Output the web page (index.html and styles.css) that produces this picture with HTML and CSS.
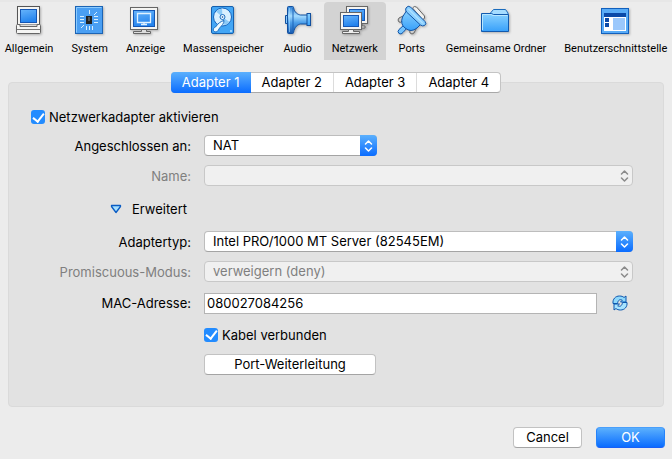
FILE: index.html
```html
<!DOCTYPE html>
<html lang="de">
<head>
<meta charset="utf-8">
<meta name="viewport" content="width=device-width, initial-scale=1">
<title>Netzwerk</title>
<link rel="stylesheet" href="styles.css">
</head>
<body>
<svg class="defs" aria-hidden="true">
  <defs>
    <linearGradient id="screen" x1="0" y1="0" x2="0.3" y2="1"><stop offset="0" stop-color="#67b4fb"/><stop offset="1" stop-color="#2484ee"/></linearGradient>
    <linearGradient id="sky" x1="0" y1="0" x2="0" y2="1"><stop offset="0" stop-color="#8ad2ff"/><stop offset="1" stop-color="#38a0fa"/></linearGradient>
    <linearGradient id="horn" x1="0" y1="0" x2="0" y2="1"><stop offset="0" stop-color="#2b7fd6"/><stop offset="0.35" stop-color="#a5dcff"/><stop offset="0.6" stop-color="#4b9eea"/><stop offset="1" stop-color="#1659b0"/></linearGradient>
    <symbol id="arrows" viewBox="0 0 9 12"><path d="M1.500 4 4.500 1l3 3M1.500 8l3 3 3-3" fill="none" stroke="currentColor" stroke-width="1.500" stroke-linecap="round" stroke-linejoin="round"/></symbol>
  </defs>
</svg>

<nav class="toolbar" aria-label="Einstellungen">
  <button class="tool" type="button">
    <svg class="tool-icon" viewBox="0 0 32 32" aria-hidden="true">
      <rect x="4.500" y="2.500" width="22" height="18" fill="#f4f4f2" stroke="#555"/>
      <rect x="7.500" y="5.500" width="16" height="13" fill="url(#screen)" stroke="#1456b4"/>
      <rect x="3.500" y="20.500" width="24" height="9" rx="1" fill="#f5f5f3" stroke="#666"/>
      <path d="M7 20.500v2h17v-2" fill="#ddd" stroke="#666"/>
      <path d="M4 25.500h23" stroke="#777"/>
    </svg>
    <span>Allgemein</span>
  </button>
  <button class="tool" type="button">
    <svg class="tool-icon" viewBox="0 0 32 32" aria-hidden="true">
      <rect x="1.500" y="2.500" width="27" height="27" fill="#4a9ff3" stroke="#1c64b4"/>
      <path d="M2.500 28.500v-25h25" fill="none" stroke="#8bcbff"/>
      <rect x="12.500" y="12.500" width="5" height="7" fill="#222" stroke="#222"/>
      <path d="M14 13h2v4h-2z" fill="#555"/>
      <path d="M6 12.500h4M6 15.500h4M6 18.500h4M20 12.500h4M20 15.500h4M20 18.500h4M15.500 6v4M15.500 22v4M12.500 22v4M18.500 22v4M20 11l3-3M7 24l3-3" stroke="#d6efff"/>
    </svg>
    <span>System</span>
  </button>
  <button class="tool" type="button">
    <svg class="tool-icon" viewBox="0 0 32 32" aria-hidden="true">
      <rect x="1.500" y="3.500" width="27" height="22" fill="#f4f4f2" stroke="#666"/>
      <rect x="4.500" y="6.500" width="21" height="16" fill="url(#screen)" stroke="#1456b4"/>
      <path d="M8.500 9.500h13v9h-13zM15 18v3M12 20.500h6" fill="none" stroke="#e0f1ff" stroke-width="1.300"/>
      <path d="M12.500 25.500h5v2h4v2h-17v-2h8z" fill="#ddd" stroke="#666"/>
    </svg>
    <span>Anzeige</span>
  </button>
  <button class="tool" type="button">
    <svg class="tool-icon" viewBox="0 0 32 32" aria-hidden="true">
      <rect x="4.500" y="2.500" width="22" height="27" rx="1.500" fill="#43a6f5" stroke="#1560ae"/>
      <circle cx="15.500" cy="13" r="9" fill="#d9f0ff" stroke="#1665bd"/>
      <path d="M15.500 13 9 7.500A9 9 0 0 1 15 4.500zM15.500 13l7 5a8 8 0 0 1-5 3.300z" fill="#8ccaf7"/>
      <circle cx="15.500" cy="13" r="2.500" fill="#eefaff" stroke="#1b6cc0"/>
      <circle cx="15.500" cy="13" r=".8" fill="#0b4798"/>
      <path d="M17 16.500c-3 .5-6 3-8.500 6.500-3 1-3 5 .5 5 2.500-.5 2.500-3 4-4.500 2-2 4-4 4-7z" fill="#eefaff" stroke="#1b6cc0"/>
      <circle cx="24" cy="27" r="1" fill="#bce3ff"/>
    </svg>
    <span>Massenspeicher</span>
  </button>
  <button class="tool" type="button">
    <svg class="tool-icon" viewBox="0 0 32 32" aria-hidden="true">
      <path d="M5.500 11.500h-2v8h2z" fill="#86cbff" stroke="#12509f"/>
      <path d="M5.500 3.500q0-1 1-1h4q1 0 1 1c1 5 4 7 7 7.500h7v9h-7c-3 .5-6 3-7 8.500q0 1-1 1h-4q-1 0-1-1z" fill="url(#horn)" stroke="#12509f"/>
      <path d="M11 4v24" stroke="#1b62b7"/>
      <path d="M7.500 4v24" stroke="#a8dbff" opacity=".6"/>
      <rect x="25" y="9.500" width="3.500" height="12" fill="url(#sky)" stroke="#12509f"/>
    </svg>
    <span>Audio</span>
  </button>
  <button class="tool tool-active" type="button" aria-current="page">
    <svg class="tool-icon" viewBox="0 0 32 32" aria-hidden="true">
      <rect x="7.500" y="2.500" width="21" height="17" fill="#f4f4f2" stroke="#666"/>
      <rect x="10.500" y="5.500" width="15" height="11" fill="url(#screen)" stroke="#1456b4"/>
      <path d="M23 20v2h3v2h-5" fill="#eee" stroke="#666"/>
      <rect x="1.500" y="8.500" width="21" height="17" fill="#f4f4f2" stroke="#666"/>
      <rect x="4.500" y="11.500" width="15" height="11" fill="url(#screen)" stroke="#1456b4"/>
      <path d="M9.500 25.500h5v2h6v2h-17v-2h6z" fill="#eee" stroke="#666"/>
    </svg>
    <span>Netzwerk</span>
  </button>
  <button class="tool" type="button">
    <svg class="tool-icon" viewBox="0 0 32 32" aria-hidden="true">
      <path d="M16.500 4q1.500-2.500 4-1l8 9q1 3-2 3.500z" fill="#f0f0ee" stroke="#666"/>
      <path d="M9 11l-6 3q-2 2 0 4 2 1 3-1zM21 23l-3 6q-2 2-4 0-1-2 1-4z" fill="#ccc" stroke="#666"/>
      <path d="M8 21l-5 4.500q-2 2 0 4 2 1.500 4-1l4-4.500" fill="#73c3ff" stroke="#1254a6"/>
      <path d="M11 6 6.500 13Q4 20 9 24q6 5 12 0l5-5z" fill="url(#sky)" stroke="#1254a6"/>
      <path d="M10 4q2-3 4.500-1L29 17.500q2 2.500-.5 4-2 1-4-.5L10.500 8q-1.500-2-.5-4z" fill="#8bd0ff" stroke="#1254a6"/>
      <path d="M12.500 5 27 19.500" stroke="#c9ecff"/>
    </svg>
    <span>Ports</span>
  </button>
  <button class="tool" type="button">
    <svg class="tool-icon" viewBox="0 0 32 32" aria-hidden="true">
      <path d="M10.500 12V9l3-3.500h12L28 9v4z" fill="#a6dcff" stroke="#1b6cbd"/>
      <path d="M1.500 9.500h10l2 1h15v17h-27z" fill="url(#sky)" stroke="#125aae"/>
      <path d="M2.500 26v-15.500h8.500l2 1h14.500" fill="none" stroke="#b8e6ff"/>
    </svg>
    <span>Gemeinsame Ordner</span>
  </button>
  <button class="tool" type="button">
    <svg class="tool-icon" viewBox="0 0 32 32" aria-hidden="true">
      <rect x="1.500" y="4.500" width="27" height="25" fill="#58abf7" stroke="#1260bd"/>
      <path d="M4 9h22v18H4z" fill="#fff"/>
      <path d="M4 9h22v4H4zM5 14h4v4H5zM5 19h4v4H5z" fill="#0a49a8"/>
      <path d="M13 14h12v12H13z" fill="#9bc8fc"/>
    </svg>
    <span>Benutzerschnittstelle</span>
  </button>
</nav>

<main class="content">
  <div class="tabs" role="tablist">
    <button class="tab tab-active" type="button" role="tab" aria-selected="true">Adapter 1</button>
    <button class="tab" type="button" role="tab" aria-selected="false">Adapter 2</button>
    <button class="tab" type="button" role="tab" aria-selected="false">Adapter 3</button>
    <button class="tab" type="button" role="tab" aria-selected="false">Adapter 4</button>
  </div>

  <form class="panel" id="adapter">
    <label class="check"><input type="checkbox" checked>Netzwerkadapter aktivieren</label>

    <div class="fields">
      <label class="field-label" for="attached">Angeschlossen an:</label>
      <div class="select select-short">
        <select id="attached"><option>NAT</option></select>
        <span class="stepper"><svg><use href="#arrows"/></svg></span>
      </div>

      <label class="field-label field-label-off" for="name">Name:</label>
      <div class="select">
        <select id="name" disabled><option></option></select>
        <span class="stepper stepper-off"><svg><use href="#arrows"/></svg></span>
      </div>

      <button class="disclosure" type="button" aria-expanded="true">
        <svg viewBox="0 0 12 10" aria-hidden="true"><path d="M1.500 1.500h9v1L6 8.500l-4.500-6z" fill="#a6e0ff" stroke="#0a5cc4" stroke-width="1.300" stroke-linejoin="round"/></svg>
        Erweitert
      </button>

      <label class="field-label" for="type">Adaptertyp:</label>
      <div class="select">
        <select id="type"><option>Intel PRO/1000 MT Server (82545EM)</option></select>
        <span class="stepper"><svg><use href="#arrows"/></svg></span>
      </div>

      <label class="field-label field-label-off" for="mode">Promiscuous-Modus:</label>
      <div class="select">
        <select id="mode" disabled><option>verweigern (deny)</option></select>
        <span class="stepper stepper-off"><svg><use href="#arrows"/></svg></span>
      </div>

      <label class="field-label" for="mac">MAC-Adresse:</label>
      <div class="mac">
        <input id="mac" type="text" value="080027084256">
        <button class="refresh" type="button" aria-label="Neue MAC-Adresse erzeugen">
          <svg viewBox="0 0 16 16" aria-hidden="true">
            <path d="M1 8.500C.5 4 3.500 1 7.500 1c2 0 3.500.5 4.500 1.500L14 1v6H8.500l1.800-1.800C8 4 6 5 5.500 8.500z" fill="#8fd8fb" stroke="#0c56ae" stroke-linejoin="round"/>
            <path d="M15 7.500C15.500 12 12.500 15 8.500 15c-2 0-3.500-.5-4.500-1.500L2 15V9h5.500l-1.800 1.800C8 12 10 11 10.500 7.500z" fill="#a8e4ff" stroke="#0c56ae" stroke-linejoin="round"/>
          </svg>
        </button>
      </div>

      <label class="check check-cable"><input type="checkbox" checked>Kabel verbunden</label>
      <button class="button button-ports" type="button">Port-Weiterleitung</button>
    </div>
  </form>
</main>

<footer class="actions">
  <button class="button" type="button">Cancel</button>
  <button class="button button-primary" type="submit" form="adapter">OK</button>
</footer>
</body>
</html>
```
FILE: styles.css
```css
* {
  box-sizing: border-box;
}

body {
  margin: 0;
  background: #ececec;
  color: #000;
  font: 13px/16px Inter, "Liberation Sans", sans-serif;
}

button,
input,
select {
  margin: 0;
  color: inherit;
  font: inherit;
}

.defs {
  position: absolute;
  width: 0;
  height: 0;
}

/* Toolbar */
.toolbar {
  display: flex;
  justify-content: center;
  gap: 2px;
  overflow: hidden;
  border-top: 2px solid #e7e7e7;
}

.tool {
  display: flex;
  flex: none;
  flex-direction: column;
  align-items: center;
  gap: 5px;
  padding: 2px 8px 3px;
  border: 0;
  border-radius: 4px 4px 0 0;
  background: none;
  font-family: Roboto, "Liberation Sans", sans-serif;
  font-size: 11px;
}

.tool-active {
  background: #d3d3d3;
}

.tool-icon {
  width: 32px;
  height: 32px;
  filter: drop-shadow(1px 1px 1px rgb(0 0 0 / 25%));
}

/* Tabs and panel */
.content {
  padding: 12px 8px 0;
}

.tabs {
  position: relative;
  display: flex;
  width: max-content;
  margin: 0 auto -11px;
  border: 1px solid #c4c4c4;
  border-bottom-color: #a8a8a8;
  border-radius: 4px;
  background: #fff;
}

.tab {
  height: 19px;
  padding: 0 11px;
  border: 0;
  border-left: 1px solid #dcdcdc;
  background: none;
  line-height: 19px;
}

.tab-active {
  height: 21px;
  margin: -1px 0 -1px -1px;
  border: 0;
  border-radius: 4px 0 0 4px;
  background: linear-gradient(#5bb0fd, #0a6cff);
  color: #fff;
}

.tab-active + .tab {
  border-left: 0;
}

.panel {
  padding: 26px 30px 31px 22px;
  border: 1px solid #dadada;
  border-radius: 4px;
  background: #e2e2e2;
}

.check {
  display: flex;
  align-items: center;
  gap: 4px;
  width: max-content;
}

.check input {
  display: grid;
  place-items: center;
  width: 14px;
  height: 14px;
  border-radius: 3px;
  background: #238cff;
  appearance: none;
}

.check input:checked::after {
  width: 5px;
  height: 9px;
  margin-bottom: 2px;
  border: solid #fff;
  border-width: 0 2px 2px 0;
  content: "";
  transform: rotate(38deg);
}

.fields {
  display: grid;
  grid-template-columns: 160px 1fr;
  gap: 9px 13px;
  align-items: center;
  margin-top: 10px;
}

.field-label {
  text-align: right;
}

.field-label-off {
  color: #7f7f7f;
}

.select {
  position: relative;
}

.select-short {
  width: 173px;
}

.select select {
  display: block;
  width: 100%;
  height: 21px;
  padding: 0 28px 2px 8px;
  border: 1px solid #bdbdbd;
  border-bottom-color: #a4a4a4;
  border-radius: 4px;
  background: #fff;
  appearance: none;
}

.select select:disabled {
  border-color: #c8c8c8;
  background: #f0f0f0;
  color: #7f7f7f;
  opacity: 1;
}

.stepper {
  position: absolute;
  inset: 0 0 0 auto;
  display: grid;
  place-items: center;
  width: 17px;
  border-radius: 0 4px 4px 0;
  background: linear-gradient(#5bb0fd, #0a6cff);
  color: #fff;
  pointer-events: none;
}

.stepper-off {
  background: none;
  color: #8a8a8a;
}

.stepper svg {
  width: 9px;
  height: 12px;
}

.disclosure {
  display: flex;
  grid-column: 1 / -1;
  align-items: center;
  gap: 10px;
  width: max-content;
  height: 27px;
  margin-left: 79px;
  padding: 0;
  border: 0;
  background: none;
}

.disclosure svg {
  width: 12px;
  height: 10px;
}

.mac {
  display: flex;
  align-items: center;
  gap: 15px;
  height: 24px;
  padding-right: 5px;
}

.mac input {
  flex: 1;
  min-width: 0;
  height: 21px;
  padding: 0 2px;
  border: 1px solid #b4b4b4;
  background: #fff;
}

.refresh {
  padding: 0;
  border: 0;
  background: none;
}

.refresh svg {
  display: block;
  width: 16px;
  height: 16px;
}

.check-cable {
  grid-column: 2;
  height: 21px;
}

/* Push buttons */
.button {
  width: 69px;
  height: 21px;
  padding: 0;
  border: 1px solid #c2c2c2;
  border-bottom-color: #a4a4a4;
  border-radius: 4px;
  background: #fff;
  line-height: 19px;
}

.button-ports {
  grid-column: 2;
  width: 172px;
}

.button-primary {
  border-color: #4a9ffb #2583fb #1a5ff5;
  background: linear-gradient(#5bb0fd, #0a6cff);
  color: #fff;
}

.actions {
  display: flex;
  justify-content: flex-end;
  gap: 14px;
  padding: 20px 7px 10px;
}
```
